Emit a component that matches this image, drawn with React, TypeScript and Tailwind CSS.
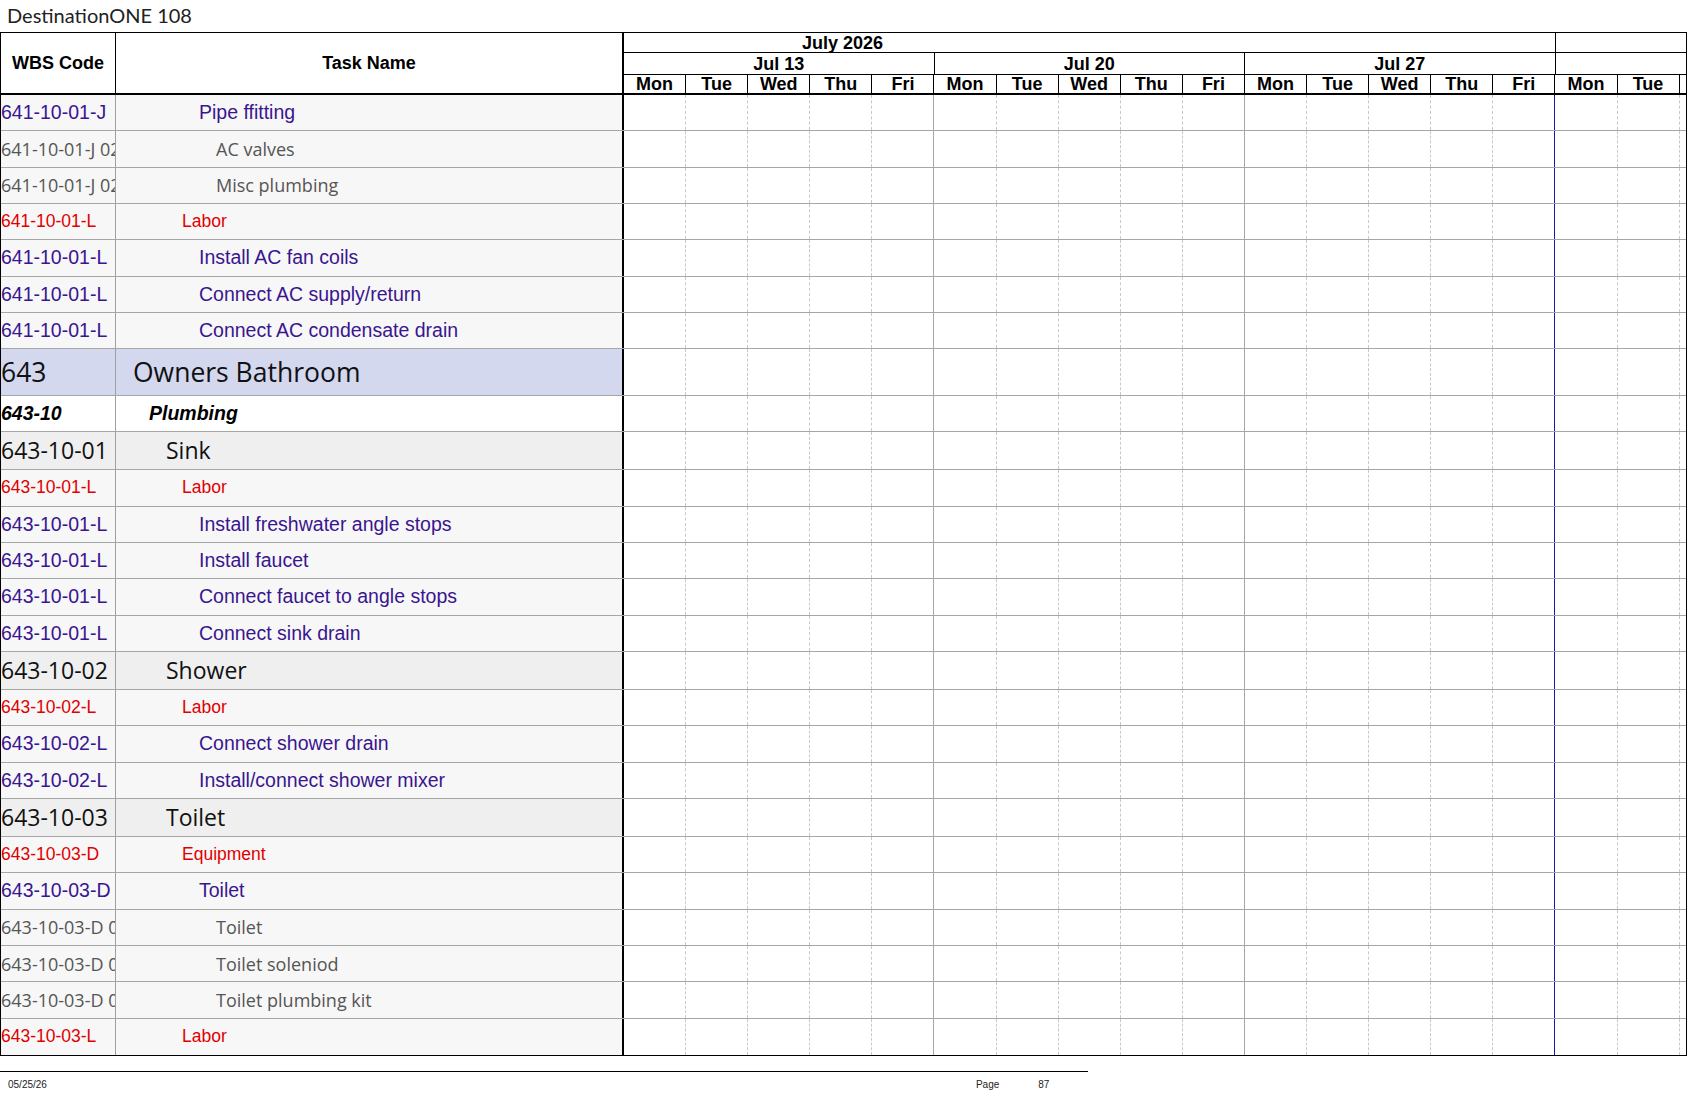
import React from 'react';

type Kind = 'task' | 'item' | 'cat' | 'area' | 'trade' | 'sub';

interface Row {
  code: string;
  name: string;
  kind: Kind;
}

const rows: Row[] = [
  { code: '641-10-01-J', name: 'Pipe ffitting', kind: 'task' },
  { code: '641-10-01-J 02', name: 'AC valves', kind: 'item' },
  { code: '641-10-01-J 02', name: 'Misc plumbing', kind: 'item' },
  { code: '641-10-01-L', name: 'Labor', kind: 'cat' },
  { code: '641-10-01-L', name: 'Install AC fan coils', kind: 'task' },
  { code: '641-10-01-L', name: 'Connect AC supply/return', kind: 'task' },
  { code: '641-10-01-L', name: 'Connect AC condensate drain', kind: 'task' },
  { code: '643', name: 'Owners Bathroom', kind: 'area' },
  { code: '643-10', name: 'Plumbing', kind: 'trade' },
  { code: '643-10-01', name: 'Sink', kind: 'sub' },
  { code: '643-10-01-L', name: 'Labor', kind: 'cat' },
  { code: '643-10-01-L', name: 'Install freshwater angle stops', kind: 'task' },
  { code: '643-10-01-L', name: 'Install faucet', kind: 'task' },
  { code: '643-10-01-L', name: 'Connect faucet to angle stops', kind: 'task' },
  { code: '643-10-01-L', name: 'Connect sink drain', kind: 'task' },
  { code: '643-10-02', name: 'Shower', kind: 'sub' },
  { code: '643-10-02-L', name: 'Labor', kind: 'cat' },
  { code: '643-10-02-L', name: 'Connect shower drain', kind: 'task' },
  { code: '643-10-02-L', name: 'Install/connect shower mixer', kind: 'task' },
  { code: '643-10-03', name: 'Toilet', kind: 'sub' },
  { code: '643-10-03-D', name: 'Equipment', kind: 'cat' },
  { code: '643-10-03-D', name: 'Toilet', kind: 'task' },
  { code: '643-10-03-D 01', name: 'Toilet', kind: 'item' },
  { code: '643-10-03-D 01', name: 'Toilet soleniod', kind: 'item' },
  { code: '643-10-03-D 01', name: 'Toilet plumbing kit', kind: 'item' },
  { code: '643-10-03-L', name: 'Labor', kind: 'cat' },
];

// row look per outline level
const kindStyle: Record<Kind, { height: string; bg: string; text: string; indent: string }> = {
  task: {
    height: 'h-[36.33px]',
    bg: 'bg-[#f7f7f7]',
    text: "font-['Liberation_Sans',Arial,sans-serif] text-[19.5px] text-[#3a1590]",
    indent: 'pl-[83px]',
  },
  item: {
    height: 'h-[36.33px]',
    bg: 'bg-[#f7f7f7]',
    text: "font-['Open_Sans',sans-serif] text-[18px] text-[#555555]",
    indent: 'pl-[100px]',
  },
  cat: {
    height: 'h-[36.33px]',
    bg: 'bg-[#f7f7f7]',
    text: "font-['Liberation_Sans',Arial,sans-serif] text-[17.5px] text-[#e00000]",
    indent: 'pl-[66px]',
  },
  area: {
    height: 'h-[47px]',
    bg: 'bg-[#d3d8ef]',
    text: "font-['Open_Sans',sans-serif] text-[26.5px] text-[#111111]",
    indent: 'pl-[17px]',
  },
  trade: {
    height: 'h-[36px]',
    bg: 'bg-white',
    text: "font-['Liberation_Sans',Arial,sans-serif] text-[19.5px] font-bold italic text-black",
    indent: 'pl-[33px]',
  },
  sub: {
    height: 'h-[38px]',
    bg: 'bg-[#efefef]',
    text: "font-['Open_Sans',sans-serif] text-[23px] text-[#111111]",
    indent: 'pl-[50px]',
  },
};

const dayNames = ['Mon', 'Tue', 'Wed', 'Thu', 'Fri'];
const weeks = ['Jul 13', 'Jul 20', 'Jul 27'];

const headFont = "font-['Liberation_Sans',Arial,sans-serif] font-bold text-[18px] text-black";

function dayBorder(i: number) {
  if (i === 14) return 'border-r border-[#1a1aa0]';
  if (i % 5 === 4) return 'border-r border-[#a6a6a6]';
  return 'border-r border-dashed border-[#c8c8c8]';
}

const GanttCells: React.FC = () => (
  <div className="flex flex-1 h-full">
    {Array.from({ length: 17 }).map((_, i) => (
      <div key={i} className={`w-[62.1px] shrink-0 h-full ${dayBorder(i)}`} />
    ))}
    <div className="flex-1" />
  </div>
);

export default function App() {
  return (
    <div className="w-[1687px] h-[1097px] bg-white relative overflow-hidden">
      {/* title */}
      <div className="h-[32px] flex items-center pl-[7px] font-['Lato',sans-serif] text-[20px] text-[#222222] leading-none pb-[2px]">
        DestinationONE 108
      </div>

      {/* header */}
      <div className="flex h-[63px] border-t border-b-2 border-l border-r border-black">
        <div className={`w-[115px] shrink-0 flex items-center justify-center border-r border-black ${headFont}`}>
          WBS Code
        </div>
        <div className={`w-[508px] shrink-0 flex items-center justify-center border-r-2 border-black ${headFont}`}>
          Task Name
        </div>
        <div className="flex-1 flex flex-col">
          <div className="h-[20px] flex border-b border-black">
            <div className={`w-[931.5px] shrink-0 flex items-center pl-[178px] border-r border-black leading-none ${headFont}`}>
              July 2026
            </div>
            <div className="flex-1" />
          </div>
          <div className="h-[22px] flex border-b border-black">
            {weeks.map((w) => (
              <div
                key={w}
                className={`w-[310.5px] shrink-0 flex items-center justify-center border-r border-black leading-none ${headFont}`}
              >
                {w}
              </div>
            ))}
            <div className="flex-1" />
          </div>
          <div className="flex-1 flex">
            {Array.from({ length: 17 }).map((_, i) => (
              <div
                key={i}
                className={`w-[62.1px] shrink-0 flex items-center justify-center border-r border-black leading-none ${headFont}`}
              >
                {dayNames[i % 5]}
              </div>
            ))}
            <div className="flex-1" />
          </div>
        </div>
      </div>

      {/* body */}
      <div className="border-l border-r border-black border-b">
        {rows.map((r, idx) => {
          const s = kindStyle[r.kind];
          const last = idx === rows.length - 1;
          return (
            <div
              key={idx}
              className={`flex ${s.height} ${last ? '' : 'border-b border-[#a6a6a6]'}`}
            >
              <div
                className={`w-[115px] shrink-0 flex items-center overflow-hidden whitespace-nowrap border-r border-[#a0a0a0] leading-none ${s.bg} ${s.text}`}
              >
                {r.code}
              </div>
              <div
                className={`w-[508px] shrink-0 flex items-center whitespace-nowrap border-r-2 border-black leading-none ${s.indent} ${s.bg} ${s.text}`}
              >
                {r.name}
              </div>
              <GanttCells />
            </div>
          );
        })}
      </div>

      {/* footer */}
      <div className="mt-[15px] w-[1088px] border-t border-black flex items-center h-[26px] font-['Liberation_Sans',Arial,sans-serif] text-[10px] text-[#222222]">
        <span className="pl-[8px]">05/25/26</span>
        <span className="ml-[929px]">Page</span>
        <span className="ml-[39px]">87</span>
      </div>
    </div>
  );
}
